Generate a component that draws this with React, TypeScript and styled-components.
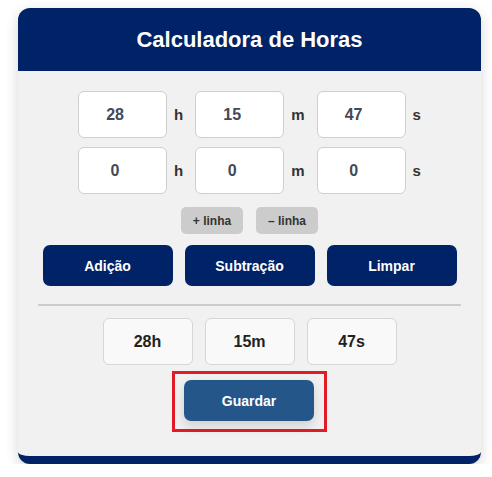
import React from 'react';
import styled, {createGlobalStyle} from 'styled-components';

const navy = '#002266';

const GlobalStyle = createGlobalStyle`
  body {
    margin: 0;
    background: #ffffff;
    font-family: 'Liberation Sans', Arial, sans-serif;
  }
`;

const Page = styled.div`
  padding: 8px 11px 0 18px;
`;

const Card = styled.div`
  width: 463px;
  background-color: #f1f1f1;
  border-radius: 12px;
  overflow: hidden;
  border-bottom: 8px solid ${navy};
  box-shadow: 0 4px 14px rgba(0, 0, 0, 0.16);
`;

const Header = styled.div`
  height: 63px;
  background-color: ${navy};
  display: flex;
  align-items: center;
  justify-content: center;
`;

const Title = styled.h1`
  margin: 0;
  color: #ffffff;
  font-size: 22px;
  font-weight: 700;
`;

const Body = styled.div`
  padding: 20px 20px 24px;
  display: flex;
  flex-direction: column;
  align-items: center;
`;

const TimeRow = styled.div`
  display: flex;
  align-items: center;
  justify-content: center;
  margin-top: ${(p: {first?: boolean}) => (p.first ? '0' : '9px')};
`;

const TimeInput = styled.input`
  width: 89px;
  height: 47px;
  box-sizing: border-box;
  border: 1px solid #cfcfcf;
  border-radius: 6px;
  background: #ffffff;
  text-align: center;
  font-family: inherit;
  font-size: 16px;
  font-weight: 700;
  color: #434a57;
  outline: none;
`;

const Unit = styled.span`
  font-size: 15px;
  font-weight: 700;
  color: #333;
  margin: 0 12px 0 7px;
  &:last-child {
    margin-right: 0;
  }
`;

const LineControls = styled.div`
  display: flex;
  gap: 13px;
  margin-top: 13px;
`;

const SmallButton = styled.button`
  width: 62px;
  height: 27px;
  border: none;
  border-radius: 5px;
  background-color: #cccccc;
  color: #333;
  font-family: inherit;
  font-size: 12px;
  font-weight: 700;
  padding: 0;
`;

const Actions = styled.div`
  display: flex;
  gap: 12px;
  margin-top: 11px;
`;

const ActionButton = styled.button`
  width: 130px;
  height: 41px;
  border: none;
  border-radius: 7px;
  background-color: ${navy};
  color: #ffffff;
  font-family: inherit;
  font-size: 14px;
  font-weight: 700;
  padding: 0;
`;

const Divider = styled.hr`
  align-self: stretch;
  margin: 18px 0 0;
  border: none;
  height: 2px;
  background-color: #cccccc;
`;

const Results = styled.div`
  display: flex;
  gap: 12px;
  margin-top: 12px;
`;

const ResultBox = styled.div`
  width: 90px;
  height: 47px;
  box-sizing: border-box;
  border: 1px solid #d6d6d6;
  border-radius: 6px;
  background-color: #f9f9f9;
  display: flex;
  align-items: center;
  justify-content: center;
  font-size: 16px;
  font-weight: 700;
  color: #222;
`;

const Highlight = styled.div`
  margin-top: 6px;
  border: 3px solid #e21c25;
  padding: 6px 10px 8px 9px;
`;

const SaveButton = styled.button`
  display: block;
  width: 130px;
  height: 41px;
  border: none;
  border-radius: 7px;
  background-color: #24568a;
  color: #ffffff;
  font-family: inherit;
  font-size: 14px;
  font-weight: 700;
  padding: 0;
  box-shadow: 0 5px 12px rgba(0, 0, 0, 0.14);
`;

const rows = [
  {h: 28, m: 15, s: 47},
  {h: 0, m: 0, s: 0},
];

export default function App() {
  return (
    <Page>
      <GlobalStyle />
      <Card>
        <Header>
          <Title>Calculadora de Horas</Title>
        </Header>
        <Body>
          {rows.map((r, i) => (
            <TimeRow key={i} first={i === 0}>
              <TimeInput type="number" defaultValue={r.h} />
              <Unit>h</Unit>
              <TimeInput type="number" defaultValue={r.m} />
              <Unit>m</Unit>
              <TimeInput type="number" defaultValue={r.s} />
              <Unit>s</Unit>
            </TimeRow>
          ))}
          <LineControls>
            <SmallButton>+ linha</SmallButton>
            <SmallButton>– linha</SmallButton>
          </LineControls>
          <Actions>
            <ActionButton>Adição</ActionButton>
            <ActionButton>Subtração</ActionButton>
            <ActionButton>Limpar</ActionButton>
          </Actions>
          <Divider />
          <Results>
            <ResultBox>28h</ResultBox>
            <ResultBox>15m</ResultBox>
            <ResultBox>47s</ResultBox>
          </Results>
          <Highlight>
            <SaveButton>Guardar</SaveButton>
          </Highlight>
        </Body>
      </Card>
    </Page>
  );
}
